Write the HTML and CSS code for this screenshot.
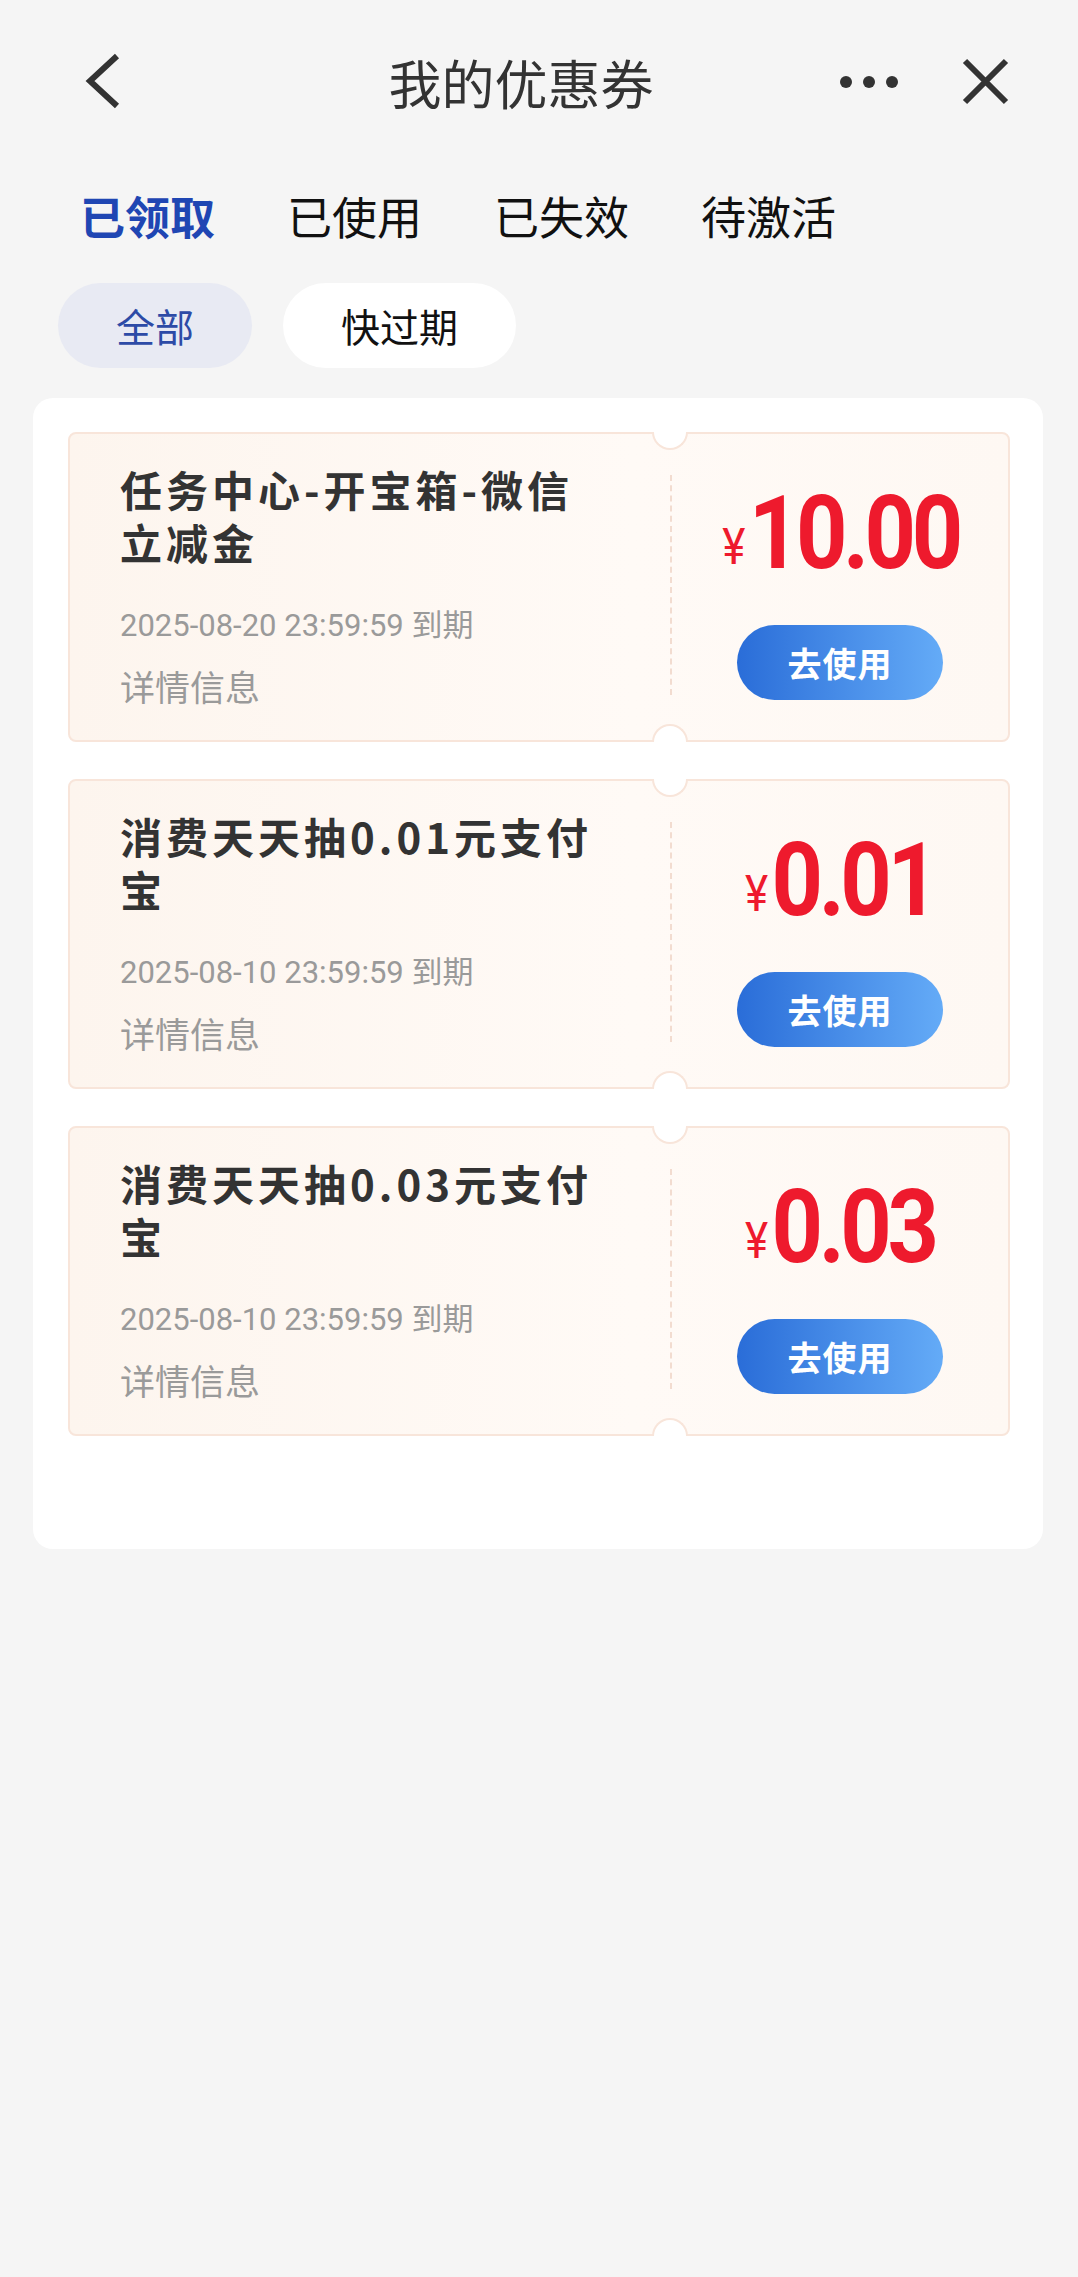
FILE: index.html
```html
<!DOCTYPE html>
<html lang="zh-CN">
<head>
    <meta name="viewport" content="width=device-width, initial-scale=1.0">
    <title>我的优惠券</title>
    <link rel="stylesheet" href="styles.css">
</head>
<body>
    <div class="nav">
        <div class="nav-back">
            <svg width="40" height="60" viewBox="0 0 40 60"><polyline points="33,4 6,29 33,54" fill="none" stroke="#333" stroke-width="6"/></svg>
        </div>
        <h1 class="nav-title">我的优惠券</h1>
        <div class="nav-actions">
            <svg width="60" height="14" viewBox="0 0 60 14"><circle cx="8" cy="7" r="6" fill="#333"/><circle cx="31" cy="7" r="6" fill="#333"/><circle cx="54" cy="7" r="6" fill="#333"/></svg>
            <svg width="50" height="50" viewBox="0 0 50 50"><path d="M4 4 L45 45 M45 4 L4 45" stroke="#333" stroke-width="6"/></svg>
        </div>
    </div>

    <div class="tabs">
        <span class="tab active">已领取</span>
        <span class="tab">已使用</span>
        <span class="tab">已失效</span>
        <span class="tab">待激活</span>
    </div>

    <div class="filters">
        <span class="pill active">全部</span>
        <span class="pill">快过期</span>
    </div>

    <div class="card">
        <div class="coupon">
            <div class="coupon-info">
                <div class="coupon-title">任务中心-开宝箱-微信立减金</div>
                <div class="coupon-date">2025-08-20 23:59:59 到期</div>
                <div class="coupon-detail">详情信息</div>
            </div>
            <div class="coupon-line"></div>
            <div class="coupon-price">
                <div class="amount"><span class="yen">¥</span>10.00</div>
                <a href="#" class="use-btn">去使用</a>
            </div>
            <span class="notch notch-top"></span>
            <span class="notch notch-bottom"></span>
        </div>
        <div class="coupon">
            <div class="coupon-info">
                <div class="coupon-title">消费天天抽0.01元支付宝</div>
                <div class="coupon-date">2025-08-10 23:59:59 到期</div>
                <div class="coupon-detail">详情信息</div>
            </div>
            <div class="coupon-line"></div>
            <div class="coupon-price">
                <div class="amount"><span class="yen">¥</span>0.01</div>
                <a href="#" class="use-btn">去使用</a>
            </div>
            <span class="notch notch-top"></span>
            <span class="notch notch-bottom"></span>
        </div>
        <div class="coupon">
            <div class="coupon-info">
                <div class="coupon-title">消费天天抽0.03元支付宝</div>
                <div class="coupon-date">2025-08-10 23:59:59 到期</div>
                <div class="coupon-detail">详情信息</div>
            </div>
            <div class="coupon-line"></div>
            <div class="coupon-price">
                <div class="amount"><span class="yen">¥</span>0.03</div>
                <a href="#" class="use-btn">去使用</a>
            </div>
            <span class="notch notch-top"></span>
            <span class="notch notch-bottom"></span>
        </div>
    </div>
</body>
</html>
```

FILE: styles.css
```css
body {
    margin: 0;
    padding: 0;
    background-color: #f5f5f5;
    font-family: "Noto Sans CJK SC", sans-serif;
    color: #333;
}
.nav {
    display: flex;
    align-items: center;
    height: 164px;
}
.nav-back {
    width: 214px;
    box-sizing: border-box;
    padding-left: 84px;
    display: flex;
}
.nav-title {
    flex: 1;
    margin: 0;
    text-align: center;
    font-size: 53px;
    font-weight: normal;
    color: #333;
    line-height: 70px;
}
.nav-actions {
    width: 250px;
    box-sizing: border-box;
    padding-left: 10px;
    display: flex;
    align-items: center;
    gap: 63px;
}
.tabs {
    display: flex;
    gap: 72px;
    padding-left: 80px;
    margin-top: 22px;
}
.tab {
    font-size: 45px;
    line-height: 60px;
    color: #111;
}
.tab.active {
    color: #1f46b3;
    font-weight: bold;
}
.filters {
    display: flex;
    gap: 31px;
    padding-left: 58px;
    margin-top: 37px;
}
.pill {
    height: 85px;
    line-height: 85px;
    padding: 0 58px;
    border-radius: 43px;
    background: #fff;
    font-size: 39px;
    color: #111;
}
.pill.active {
    background: #e8eaf3;
    color: #2d4ba6;
}
.card {
    width: 1010px;
    margin: 30px 0 0 33px;
    box-sizing: border-box;
    padding: 34px 33px 113px 35px;
    background: #fff;
    border-radius: 20px;
    display: flex;
    flex-direction: column;
    gap: 37px;
}
.coupon {
    position: relative;
    display: flex;
    height: 310px;
    box-sizing: border-box;
    border: 2px solid #f8e5da;
    border-radius: 8px;
    background: linear-gradient(90deg, #fdf5ee, #fffaf6 60%, #fef8f3);
}
.coupon-info {
    width: 600px;
    box-sizing: border-box;
    padding: 28px 0 0 50px;
}
.coupon-title {
    width: 482px;
    font-size: 42px;
    line-height: 53px;
    font-weight: bold;
    letter-spacing: 4px;
    color: #333;
}
.coupon-date {
    margin-top: 38px;
    font-family: Roboto, "Noto Sans CJK SC", sans-serif;
    font-size: 31px;
    line-height: 40px;
    color: #9a9a9a;
}
.coupon-detail {
    margin-top: 18px;
    font-size: 35px;
    line-height: 44px;
    color: #9a9a9a;
}
.coupon-line {
    border-left: 2px dashed #f2dcd0;
    margin: 41px 0 45px;
}
.coupon-price {
    flex: 1;
    display: flex;
    flex-direction: column;
    align-items: center;
    padding-top: 49px;
}
.amount {
    font-family: Roboto, sans-serif;
    font-size: 102px;
    line-height: 100px;
    font-weight: bold;
    letter-spacing: -5px;
    color: #ee1a2d;
    transform: scaleX(0.88);
}
.yen {
    font-size: 50px;
    font-weight: normal;
    letter-spacing: 0;
    margin-right: 4px;
    vertical-align: 4px;
}
.use-btn {
    margin-top: 28px;
    width: 206px;
    height: 75px;
    line-height: 75px;
    border-radius: 38px;
    background: linear-gradient(90deg, #2a6dd8, #64abf7);
    color: #fff;
    text-align: center;
    text-decoration: none;
    font-size: 34px;
    font-weight: bold;
    letter-spacing: 1px;
}
.notch {
    position: absolute;
    left: 582px;
    width: 36px;
    height: 18px;
    box-sizing: border-box;
    background: #fff;
    border: 2px solid #f8e5da;
}
.notch-top {
    top: -2px;
    border-top: none;
    border-radius: 0 0 18px 18px;
}
.notch-bottom {
    bottom: -2px;
    border-bottom: none;
    border-radius: 18px 18px 0 0;
}
```
